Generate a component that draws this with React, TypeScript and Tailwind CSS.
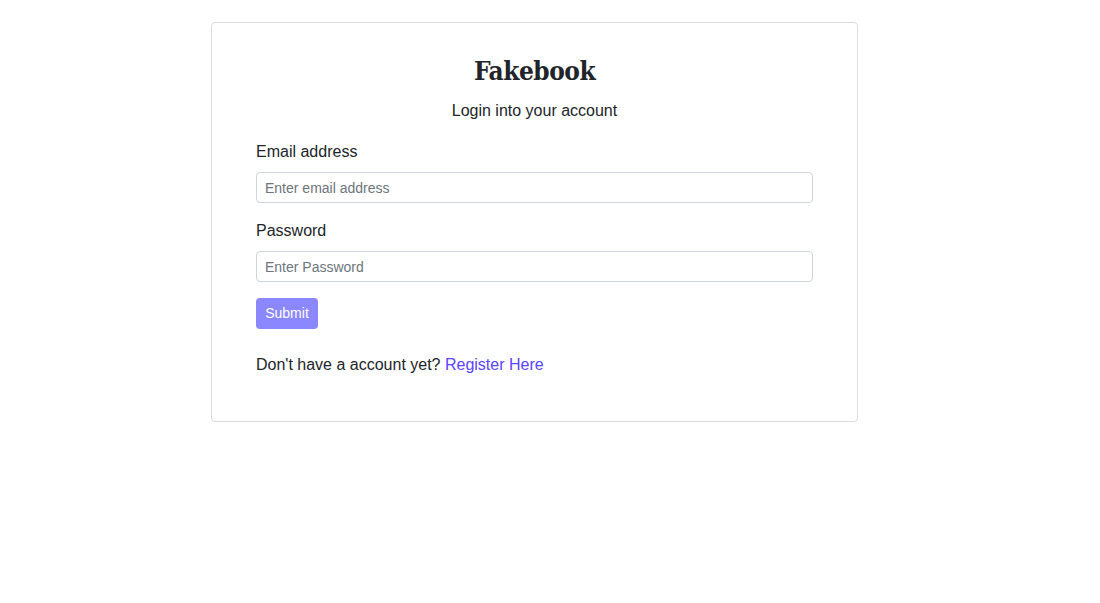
import { useState } from 'react';

export default function App() {
  const [email, setEmail] = useState('');
  const [password, setPassword] = useState('');

  return (
    <div className="min-h-screen bg-white font-['Liberation_Sans',Arial,sans-serif] text-[#212529]">
      <div className="pt-[22px] pl-[211px]">
        <div className="w-[647px] border border-[#dcdcdc] rounded-[4px] px-[44px] pt-[30px] pb-[44px]">
          <h1 className="text-center font-['DejaVu_Serif_Condensed','DejaVu_Serif',serif] [font-stretch:condensed] font-bold text-[26px] leading-[36px] tracking-[-0.5px] text-[#212529]">
            Fakebook
          </h1>
          <p className="text-center text-[16px] leading-[24px] mt-[10px]">Login into your account</p>

          <form className="mt-[17px]" onSubmit={(e) => e.preventDefault()}>
            <label className="block text-[16px] leading-[24px]">Email address</label>
            <input
              type="email"
              placeholder="Enter email address"
              value={email}
              onChange={(e) => setEmail(e.target.value)}
              className="mt-[8px] block w-full h-[31px] border border-[#ced4da] rounded-[4px] px-[8px] text-[14px] text-[#212529] placeholder:text-[#6c757d] outline-none"
            />

            <label className="block text-[16px] leading-[24px] mt-[16px]">Password</label>
            <input
              type="password"
              placeholder="Enter Password"
              value={password}
              onChange={(e) => setPassword(e.target.value)}
              className="mt-[8px] block w-full h-[31px] border border-[#ced4da] rounded-[4px] px-[8px] text-[14px] text-[#212529] placeholder:text-[#6c757d] outline-none"
            />

            <button
              type="submit"
              className="mt-[16px] h-[31px] w-[62px] rounded-[4px] bg-[#8b87ff] text-white text-[14px]"
            >
              Submit
            </button>
          </form>

          <p className="mt-[24px] text-[16px] leading-[24px]">
            Don't have a account yet? <a href="#" className="text-[#5a45ff]">Register Here</a>
          </p>
        </div>
      </div>
    </div>
  );
}
